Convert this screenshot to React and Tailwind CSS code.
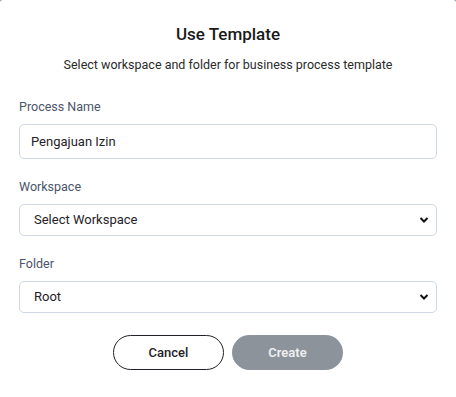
import React from 'react';

const Field = ({ label, children }) => (
  <div className="flex flex-col">
    <label className="text-[12.5px] leading-[16px] text-[#4a5568] mb-[9px]">{label}</label>
    {children}
  </div>
);

const SelectBox = ({ value }) => (
  <div className="h-[32px] flex items-center justify-between pl-[14px] pr-[6px] border border-[#cfd8e3] rounded-[5px] bg-white">
    <span className="text-[13px] text-[#1f2328]">{value}</span>
    <svg width="10" height="8" viewBox="0 0 10 8" className="mr-[1px]">
      <path d="M1.5 2 L5 5.5 L8.5 2" fill="none" stroke="#111" strokeWidth="2" />
    </svg>
  </div>
);

export default function App() {
  return (
    <div className="w-[456px] h-[397px] bg-[#9aa3b0] font-['Roboto',sans-serif]">
      <div className="w-full h-full bg-white rounded-t-[3px] px-[19px] pt-[24px] flex flex-col">
        <h2 className="text-[17px] leading-[20px] font-medium text-[#1a1a1a] text-center">Use Template</h2>
        <p className="text-[12.5px] leading-[16px] text-[#2b2b2b] text-center mt-[13px]">
          Select workspace and folder for business process template
        </p>

        <div className="mt-[26px] flex flex-col gap-[20px]">
          <Field label="Process Name">
            <input
              defaultValue="Pengajuan Izin"
              className="h-[35px] px-[11px] border border-[#cfd8e3] rounded-[5px] text-[13px] text-[#1f2328] outline-none"
            />
          </Field>
          <Field label="Workspace">
            <SelectBox value="Select Workspace" />
          </Field>
          <Field label="Folder">
            <SelectBox value="Root" />
          </Field>
        </div>

        <div className="mt-[22px] flex justify-center gap-[8px]">
          <button className="w-[111px] h-[35px] rounded-full border border-[#1f2328] bg-white text-[13px] font-medium text-[#1f2328]">
            Cancel
          </button>
          <button className="w-[111px] h-[35px] rounded-full bg-[#8d939b] text-[13px] font-semibold text-[#eef0f2]">
            Create
          </button>
        </div>
      </div>
    </div>
  );
}
